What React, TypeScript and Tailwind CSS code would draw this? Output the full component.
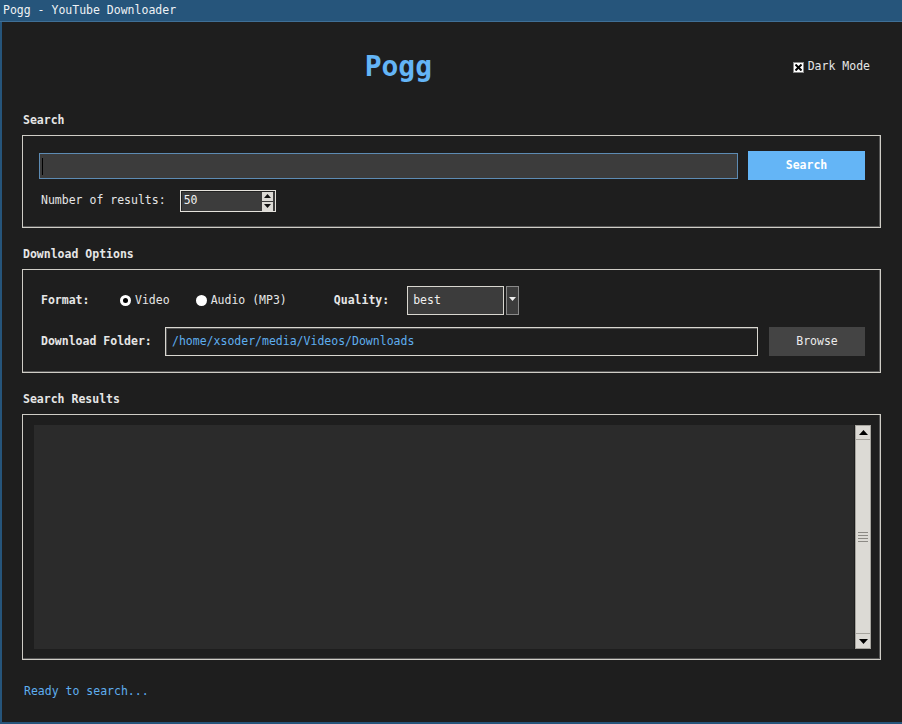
import React from 'react';

const mono = "font-['DejaVu_Sans_Mono','Liberation_Mono',monospace]";

function Frame({ children, className = '' }: { children: React.ReactNode; className?: string }) {
  return (
    <div className={`border border-[#cfcdc6] shadow-[inset_-1px_-1px_0_#555] ${className}`}>{children}</div>
  );
}

function SectionLabel({ text, className = '' }: { text: string; className?: string }) {
  return <div className={`h-[16px] leading-[16px] font-bold text-[#e6e6e6] ${className}`}>{text}</div>;
}

function Spinbox() {
  return (
    <div className="ml-[14px] flex h-[22px] w-[96px] items-center border border-[#e4e2dc] bg-[#3c3c3c] shadow-[inset_1px_1px_0_#222]">
      <span className="ml-[3px] flex-1 text-[#f0f0f0]">50</span>
      <div className="mr-[2px] flex flex-col gap-[1px]">
        <div className="flex h-[9px] w-[11px] items-center justify-center bg-[#dcdad5]">
          <svg width="7" height="4" viewBox="0 0 7 4"><path d="M0 4 L3.5 0 L7 4 Z" fill="#111" /></svg>
        </div>
        <div className="flex h-[9px] w-[11px] items-center justify-center bg-[#dcdad5]">
          <svg width="7" height="4" viewBox="0 0 7 4"><path d="M0 0 L7 0 L3.5 4 Z" fill="#111" /></svg>
        </div>
      </div>
    </div>
  );
}

function Radio({ checked, label }: { checked: boolean; label: string }) {
  return (
    <div className="flex items-center gap-[4px]">
      <div className="flex h-[11px] w-[11px] items-center justify-center rounded-full bg-white">
        {checked && <div className="h-[5px] w-[5px] rounded-full bg-black" />}
      </div>
      <span className="text-[#e6e6e6]">{label}</span>
    </div>
  );
}

export default function App() {
  return (
    <div className={`${mono} flex h-[724px] w-[902px] flex-col bg-[#1e1e1e] text-[11.5px] text-[#e6e6e6]`}>
      {/* window title bar */}
      <div className="flex h-[22px] items-center border-b border-[#3f6f96] bg-[#26557b] pl-[3px] text-[11.5px] text-[#eef2f5]">
        Pogg - YouTube Downloader
      </div>

      <div className="flex flex-1 flex-col border-l-[2px] border-b-[2px] border-[#26557b]">
        <div className="flex flex-1 flex-col pl-[20px] pr-[21px]">
          {/* header */}
          <div className="mt-[28px] flex">
            <div className="flex flex-1 justify-center pr-[18px]">
              <span className="h-[34px] text-[28px] font-bold leading-[34px] text-[#64b5f6]">Pogg</span>
            </div>
            <div className="mr-[11px] mt-[9px] flex h-[16px] items-center gap-[4px]">
              <div className="flex h-[11px] w-[11px] items-center justify-center border border-[#888] bg-white">
                <svg width="7" height="7" viewBox="0 0 7 7">
                  <path d="M0.5 0.5 L6.5 6.5 M6.5 0.5 L0.5 6.5" stroke="#000" strokeWidth="2" />
                </svg>
              </div>
              <span className="text-[#e6e6e6]">Dark Mode</span>
            </div>
          </div>

          {/* search */}
          <SectionLabel text="Search" className="ml-[1px] mt-[28px]" />
          <Frame className="mt-[7px] px-[15px] pb-[15px] pt-[15px]">
            <div className="flex h-[29px] items-center">
              <div className="relative ml-[1px] h-[26px] flex-1 border border-[#5d8bb3] bg-[#3c3c3c]">
                <div className="absolute left-[2px] top-[4px] h-[17px] w-[1px] bg-black" />
              </div>
              <button className="ml-[10px] h-[29px] w-[117px] bg-[#64b5f6] font-bold text-white">Search</button>
            </div>
            <div className="mt-[10px] flex h-[22px] items-center pl-[3px]">
              <span>Number of results:</span>
              <Spinbox />
            </div>
          </Frame>

          {/* download options */}
          <SectionLabel text="Download Options" className="ml-[1px] mt-[18px]" />
          <Frame className="mt-[7px] px-[15px] pb-[16px] pt-[16px]">
            <div className="flex h-[29px] items-center pl-[3px]">
              <span className="w-[79px] font-bold">Format:</span>
              <Radio checked label="Video" />
              <div className="ml-[26px]"><Radio checked={false} label="Audio (MP3)" /></div>
              <span className="ml-[47px] font-bold">Quality:</span>
              <div className="ml-[18px] flex h-[29px] items-center gap-[2px]">
                <div className="flex h-[29px] w-[97px] items-center border border-[#d9d7d0] bg-[#3c3c3c] pl-[5px] text-[#f0f0f0]">
                  best
                </div>
                <div className="flex h-[29px] w-[13px] justify-center border border-[#8a8a8a] bg-[#3c3c3c] pt-[10px]">
                  <svg width="7" height="4" viewBox="0 0 7 4"><path d="M0 0 L7 0 L3.5 4 Z" fill="#eee" /></svg>
                </div>
              </div>
            </div>
            <div className="mt-[12px] flex h-[29px] items-center pl-[3px]">
              <span className="w-[124px] font-bold">Download Folder:</span>
              <div className="flex h-[29px] flex-1 items-center border border-[#d9d7d0] bg-[#1e1e1e] pl-[6px] text-[#5eaeef] shadow-[inset_1px_1px_0_#555]">
                /home/xsoder/media/Videos/Downloads
              </div>
              <button className="ml-[11px] h-[29px] w-[96px] bg-[#444444] text-[#ececec]">Browse</button>
            </div>
          </Frame>

          {/* results */}
          <SectionLabel text="Search Results" className="ml-[1px] mt-[18px]" />
          <Frame className="mt-[7px] flex h-[246px] pb-[10px] pl-[11px] pr-[9px] pt-[10px]">
            <div className="flex-1 bg-[#2b2b2b]" />
            <div className="ml-[1px] flex w-[16px] flex-col border border-[#a6a49e] bg-[#dcdad5]">
              <div className="flex h-[14px] items-center justify-center border-b border-[#a6a49e]">
                <svg width="9" height="5" viewBox="0 0 9 5"><path d="M0 5 L4.5 0 L9 5 Z" fill="#000" /></svg>
              </div>
              <div className="flex flex-1 flex-col items-center justify-center gap-[2px]">
                {[0, 1, 2, 3].map(i => (
                  <div key={i} className="h-[1px] w-[10px] bg-[#8c8a85]" />
                ))}
              </div>
              <div className="flex h-[15px] items-center justify-center border-t border-[#a6a49e]">
                <svg width="9" height="5" viewBox="0 0 9 5"><path d="M0 0 L9 0 L4.5 5 Z" fill="#000" /></svg>
              </div>
            </div>
          </Frame>

          <div className="ml-[2px] mt-[23px] h-[16px] leading-[16px] text-[#5eaeef]">Ready to search...</div>
        </div>
      </div>
    </div>
  );
}
